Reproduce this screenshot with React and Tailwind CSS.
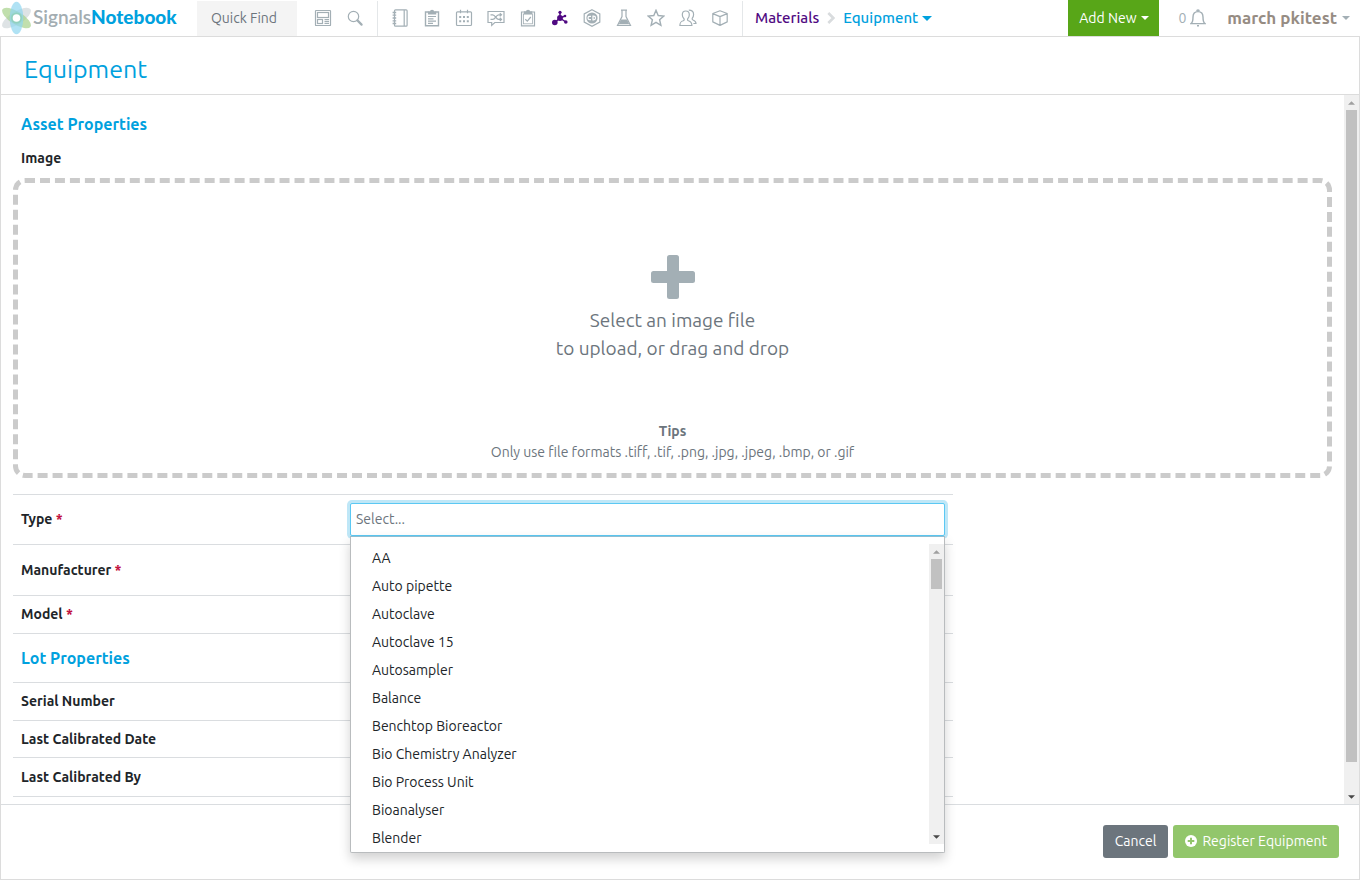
import React from "react";

const assetRows = [
  { id: "manufacturer", label: "Manufacturer", required: true, height: "h-[51px]" },
  { id: "model", label: "Model", required: true, height: "h-[38px]" },
];

const lotRows = [
  { id: "serial", label: "Serial Number", height: "h-[38px]" },
  { id: "calibrated-date", label: "Last Calibrated Date", height: "h-[37px]" },
  { id: "calibrated-by", label: "Last Calibrated By", height: "h-[39px]" },
];

const equipmentTypes = [
  "AA",
  "Auto pipette",
  "Autoclave",
  "Autoclave 15",
  "Autosampler",
  "Balance",
  "Benchtop Bioreactor",
  "Bio Chemistry Analyzer",
  "Bio Process Unit",
  "Bioanalyser",
  "Blender",
];

function Icon({ children }) {
  return (
    <svg
      className="size-[18px]"
      viewBox="0 0 18 18"
      fill="none"
      stroke="currentColor"
      strokeWidth="1.2"
      aria-hidden="true"
    >
      {children}
    </svg>
  );
}

const searchIcons = [
  {
    name: "Dashboard",
    art: (
      <>
        <rect x="1.5" y="1.5" width="15" height="15" rx="0.6" />
        <rect x="3.5" y="3.5" width="11" height="5" />
        <rect x="3.5" y="10.5" width="5" height="4" />
        <path d="M10.5 10.7h4.5M10.5 12.6h4.5M10.5 14.5h4.5" />
      </>
    ),
  },
  {
    name: "Search",
    art: (
      <>
        <circle cx="7.5" cy="7.5" r="5.2" />
        <path d="M11.4 11.4l4.2 4.2" strokeWidth="2.2" strokeLinecap="round" />
      </>
    ),
  },
];

const moduleIcons = [
  {
    name: "Notebooks",
    art: (
      <>
        <rect x="3.5" y="0.8" width="12.6" height="16.4" rx="1" />
        <path d="M13.2 1v16" />
        <path d="M1.6 3.5h3.6M1.6 6.2h3.6M1.6 9h3.6M1.6 11.8h3.6M1.6 14.5h3.6" strokeWidth="1.3" />
      </>
    ),
  },
  {
    name: "Tasks",
    art: (
      <>
        <path d="M5.5 3h-3v13.8h13V3h-3" strokeWidth="1.4" />
        <path d="M5.5 5V2.8h1.8a1.8 1.8 0 0 1 3.5 0h1.9V5z" fill="currentColor" />
        <path d="M5 7.5h8M5 9.9h5.5M5 12.2h8M5 14.4h5" />
      </>
    ),
  },
  {
    name: "Calendar",
    art: (
      <>
        <rect x="1.5" y="2.8" width="15" height="13.7" rx="1" />
        <path d="M5.5 0.8v3.5M12.5 0.8v3.5" />
        <path d="M4.2 8h2M8 8h2M11.8 8h2M4.2 12.2h2M8 12.2h2M11.8 12.2h2" strokeWidth="2" />
      </>
    ),
  },
  {
    name: "Discussions",
    art: (
      <>
        <path d="M1 2.5h16v11H7.8L4.7 16.4v-2.9H1z" />
        <path d="M3.5 5.8h2.3c2.6 0 3.2 4.6 5.8 4.6h2.6M3.5 10.4h2.3c2.6 0 3.2-4.6 5.8-4.6h2.6M12.8 4.2l1.7 1.6-1.7 1.6M12.8 8.8l1.7 1.6-1.7 1.6" />
      </>
    ),
  },
  {
    name: "Requests",
    art: (
      <>
        <path d="M5.5 3h-3v13.8h13V3h-3" strokeWidth="1.2" />
        <rect x="4.5" y="5" width="9" height="9.8" strokeWidth="0.8" />
        <path d="M5.5 4.6V2.8h1.8a1.8 1.8 0 0 1 3.5 0h1.9v1.8z" fill="currentColor" />
        <path d="M6.3 10.3l2 1.9 3.5-4.2" />
      </>
    ),
  },
  {
    name: "Materials",
    active: true,
    art: (
      <g fill="currentColor" stroke="none">
        <circle cx="9" cy="9" r="2.9" />
        <circle cx="9" cy="3.3" r="1.6" />
        <circle cx="3.8" cy="13.5" r="2.8" />
        <circle cx="14.8" cy="13" r="1.8" />
        <circle cx="14" cy="7" r="1.3" />
        <path d="M9 9V3M9 9l-5 4.4M9 9l5.8 4M9 9l5-2" stroke="currentColor" strokeWidth="1.5" />
      </g>
    ),
  },
  {
    name: "Compounds",
    art: (
      <>
        <path d="M9 0.7l7.8 4.2v8.2L9 17.3l-7.8-4.2V4.9z" strokeWidth="1.2" />
        <circle cx="9" cy="9" r="5.6" fill="currentColor" stroke="none" />
        <path d="M8 7.3H6.7A1.7 1.7 0 0 0 6.7 10.7H8M10 7.2v3.6h.7a1.8 1.8 0 0 0 0-3.6z" stroke="white" />
      </>
    ),
  },
  {
    name: "Experiments",
    art: (
      <>
        <path d="M6 1.2h6M7 1.5v6L2.5 16.5h13L11 7.5v-6" />
        <path d="M6 10.5h6l2.3 4.8H3.7z" fill="currentColor" stroke="none" />
      </>
    ),
  },
  {
    name: "Favorites",
    art: (
      <path
        d="M9 1.3l2.2 5.2 5.6.5-4.2 3.7 1.3 5.6L9 13.3l-4.9 3 1.3-5.6L1.2 7l5.6-.5z"
        strokeWidth="1.4"
      />
    ),
  },
  {
    name: "Groups",
    art: (
      <>
        <path d="M6.8 2c2.1 0 3.5 1.5 3.5 3.8 0 1.8-.7 3.1-1.6 3.9-.5.9 0 1.8.8 2.1 2.4.8 3.4 1.5 3.4 4.7H.9c0-3.2.9-3.9 3.3-4.7.8-.3 1.3-1.2.8-2.1-.9-.8-1.7-2.1-1.7-3.9C3.3 3.5 4.7 2 6.8 2z" />
        <path d="M9.8 1.2c3 0 4.8 1.4 4.8 4.3 0 1.7-.5 2.8-1.3 3.7-.4.8 0 1.5.7 1.8 2 .8 3 1.3 3 3.5h-2.6" />
      </>
    ),
  },
  {
    name: "Inventory",
    art: <path d="M9 1.8l7.2 2.7v8.4L9 16.4l-7.2-3.5V4.5zM1.8 4.6L9 7.6l7.2-3M9 7.6v8.8" strokeLinejoin="round" />,
  },
];

function IconGroup({ items, label, className }) {
  return (
    <nav aria-label={label} className={className}>
      {items.map((item) => (
        <button
          key={item.name}
          type="button"
          aria-label={item.name}
          className={
            item.active
              ? "flex w-8 items-center justify-center text-[#500a82]"
              : "flex w-8 items-center justify-center text-[#a3afb5]"
          }
        >
          <Icon>{item.art}</Icon>
        </button>
      ))}
    </nav>
  );
}

function Caret({ className }) {
  return (
    <svg className={className} viewBox="0 0 10 5" fill="currentColor" aria-hidden="true">
      <path d="M0 0h10L5 5z" />
    </svg>
  );
}

function Logo() {
  return (
    <a href="#home" aria-label="Signals Notebook" className="flex w-[197px] items-center pl-px">
      <svg className="h-[34px] w-8 shrink-0" viewBox="0 0 32 34" aria-hidden="true">
        <ellipse cx="15.5" cy="17" rx="16.5" ry="6.4" fill="#d3d9dc" opacity="0.75" transform="rotate(-32 15.5 17)" />
        <ellipse cx="15.5" cy="17" rx="16.5" ry="6.4" fill="#a6d18a" opacity="0.7" transform="rotate(32 15.5 17)" />
        <ellipse cx="15.5" cy="17" rx="6.8" ry="16.3" fill="#8fd5f0" opacity="0.7" />
        <circle cx="15.5" cy="17" r="5.6" fill="#8fd0b8" opacity="0.8" />
        <circle cx="15.5" cy="17" r="3.8" fill="white" />
      </svg>
      <span className="pb-0.5 font-['Lato','Noto_Sans',sans-serif] text-[19px] leading-6 font-semibold text-[#a3adb2]">
        Signals<b className="font-black text-[#00a1de]">Notebook</b>
      </span>
    </a>
  );
}

function TopBar() {
  return (
    <header className="flex h-[37px] items-stretch border-b border-[#dcdcdc]">
      <Logo />
      <input
        type="text"
        aria-label="Quick Find"
        placeholder="Quick Find"
        className="mt-px w-[100px] bg-[#f4f4f4] px-[14px] pb-0.5 text-sm text-[#6c757d] outline-none placeholder:text-[#6c757d]"
      />
      <IconGroup
        items={searchIcons}
        label="Find"
        className="mt-px flex border-r border-[#e4e7e9] pr-1.5 pb-0.5 pl-2.5"
      />
      <IconGroup
        items={moduleIcons}
        label="Modules"
        className="mt-px flex border-r border-[#e4e7e9] px-1.5 pb-0.5"
      />
      <nav aria-label="Breadcrumb" className="flex items-center pl-3 text-[15px] font-medium">
        <a href="#materials" className="text-[#500a82]">
          Materials
        </a>
        <svg className="mx-2 h-3 w-2" viewBox="0 0 8 12" fill="none" stroke="#d9dcde" strokeWidth="2.6" aria-hidden="true">
          <path d="M1.3 1l5 5-5 5" />
        </svg>
        <button type="button" className="flex items-center gap-1 text-[#00a1de]">
          Equipment
          <Caret className="h-[5px] w-2.5" />
        </button>
      </nav>
      <div className="ml-auto flex items-stretch">
        <button
          type="button"
          className="flex w-[91px] items-center justify-center gap-1 bg-[#58a618] text-sm text-white"
        >
          Add New
          <Caret className="h-1 w-2" />
        </button>
        <button
          type="button"
          aria-label="0 notifications"
          className="flex items-center gap-1 pl-[19px] text-sm text-[#a3afb5]"
        >
          0
          <svg className="h-[18px] w-4" viewBox="0 0 16 18" fill="none" stroke="currentColor" strokeWidth="1.4" aria-hidden="true">
            <path d="M1 14.6c1.8-1.3 2-3 2-6.6 0-3.3 1.9-5.4 5-5.4s5 2.1 5 5.4c0 3.6.2 5.3 2 6.6z" />
            <path d="M6.8 2.2a1.2 1.2 0 0 1 2.4 0M7 16.8h2" />
          </svg>
        </button>
        <button
          type="button"
          className="flex items-center gap-[5px] pr-2.5 pl-[21px] text-[17px] font-bold text-[#968c83]"
        >
          march pkitest
          <Caret className="h-1 w-2 text-[#a3afb5]" />
        </button>
      </div>
    </header>
  );
}

function ScrollBar({ className, thumb }) {
  return (
    <div aria-hidden="true" className={`flex w-[15px] shrink-0 flex-col bg-[#f0f0f0] ${className}`}>
      <div className="flex h-[15px] shrink-0 items-center justify-center">
        <Caret className="h-1 w-[7px] rotate-180 text-[#a0a0a0]" />
      </div>
      <div className="flex-1 px-0.5">
        <div className={thumb} />
      </div>
      <div className="flex h-[15px] shrink-0 items-center justify-center">
        <Caret className="h-1 w-[7px] text-[#484848]" />
      </div>
    </div>
  );
}

function FieldLabel({ htmlFor, required, children }) {
  return (
    <label htmlFor={htmlFor} className="w-[329px] shrink-0 text-sm leading-[21px] font-bold">
      {children}
      {required && <span className="text-[#c10d3c]"> *</span>}
    </label>
  );
}

function FieldRow({ row }) {
  return (
    <div className={`flex items-center border-b border-[#dadde0] px-2 ${row.height}`}>
      <FieldLabel htmlFor={row.id} required={row.required}>
        {row.label}
      </FieldLabel>
      <input id={row.id} type="text" className="h-7 min-w-0 flex-1 text-sm outline-none" />
    </div>
  );
}

function TypeSelect() {
  return (
    <div className="relative flex-1">
      <input
        id="type"
        type="text"
        role="combobox"
        aria-expanded="true"
        aria-controls="type-options"
        placeholder="Select..."
        className="block h-[33px] w-full rounded-xs border border-[#5bc8f3] bg-white px-[5px] pb-0.5 text-sm ring-3 ring-[#bfe7f7] outline-none placeholder:text-[#6c757d]"
      />
      <div className="absolute inset-x-0 top-full z-10 flex rounded-b-xs border border-[#b9bcbe] border-t-[#8fbdd0] bg-white pt-[7px] shadow-[0_6px_12px_rgba(0,0,0,0.18)]">
        <ul id="type-options" role="listbox" className="flex-1">
          {equipmentTypes.map((name) => (
            <li key={name} role="option" aria-selected="false" className="px-[21px] text-sm leading-7">
              {name}
            </li>
          ))}
        </ul>
        <ScrollBar className="mb-2" thumb="h-[30px] bg-[#c1c1c1]" />
      </div>
    </div>
  );
}

function UploadZone() {
  return (
    <button
      type="button"
      className="flex h-[300px] w-full flex-col items-center rounded-xl border-[5px] border-dashed border-[#cbcbcb] pt-[72px] text-[#6c757d]"
    >
      <svg className="size-11 text-[#a3afb5]" viewBox="0 0 44 44" fill="currentColor" aria-hidden="true">
        <rect x="16" y="0" width="12" height="44" rx="2.5" />
        <rect x="0" y="16" width="44" height="12" rx="2.5" />
      </svg>
      <span className="mt-[7px] text-[19px] leading-7">
        Select an image file
        <br />
        to upload, or drag and drop
      </span>
      <span className="mt-[59px] text-sm leading-[21px]">
        <b>Tips</b>
        <br />
        Only use file formats .tiff, .tif, .png, .jpg, .jpeg, .bmp, or .gif
      </span>
    </button>
  );
}

export default function App() {
  return (
    <div className="flex min-h-screen flex-col bg-white font-['Ubuntu','Noto_Sans',sans-serif] text-[#212529]">
      <TopBar />
      <main className="flex flex-1 flex-col border-x border-b border-[#dcdcdc]">
        <h1 className="flex h-[58px] items-center border-b border-[#dcdcdc] px-[23px] pt-1.5 text-[25px] leading-8 text-[#00a1de]">
          Equipment
        </h1>
        <div className="flex flex-1">
          <div className="min-w-0 flex-1 px-3 pt-[17px]">
            <h2 className="px-2 text-base leading-6 font-bold text-[#00a1de]">Asset Properties</h2>
            <h3 className="mt-3 mb-[9px] px-2 text-sm leading-[21px] font-bold">Image</h3>
            <UploadZone />
            <div className="mt-4 max-w-[940px] border-t border-[#dadde0]">
              <div className="flex h-[50px] items-center border-b border-[#dadde0] px-2">
                <FieldLabel htmlFor="type" required>
                  Type
                </FieldLabel>
                <TypeSelect />
              </div>
              {assetRows.map((row) => (
                <FieldRow key={row.id} row={row} />
              ))}
              <h2 className="flex h-[49px] items-center border-b border-[#dadde0] px-2 text-base font-bold text-[#00a1de]">
                Lot Properties
              </h2>
              {lotRows.map((row) => (
                <FieldRow key={row.id} row={row} />
              ))}
            </div>
          </div>
          <ScrollBar className="" thumb="h-[96%] bg-[#c1c1c1]" />
        </div>
        <footer className="flex h-[75px] items-center justify-end gap-[5px] border-t border-[#dadde0] pr-5 pb-0.5">
          <button type="button" className="h-[33px] rounded-[3px] bg-[#6c757d] px-3 text-sm text-white">
            Cancel
          </button>
          <button
            type="button"
            className="flex h-[33px] items-center gap-[5px] rounded-[3px] bg-[#92c66b] px-3 text-sm text-white"
          >
            <svg className="size-3" viewBox="0 0 12 12" aria-hidden="true">
              <circle cx="6" cy="6" r="6" fill="white" />
              <path d="M6 2.7v6.6M2.7 6h6.6" stroke="#92c66b" strokeWidth="2" />
            </svg>
            Register Equipment
          </button>
        </footer>
      </main>
    </div>
  );
}
